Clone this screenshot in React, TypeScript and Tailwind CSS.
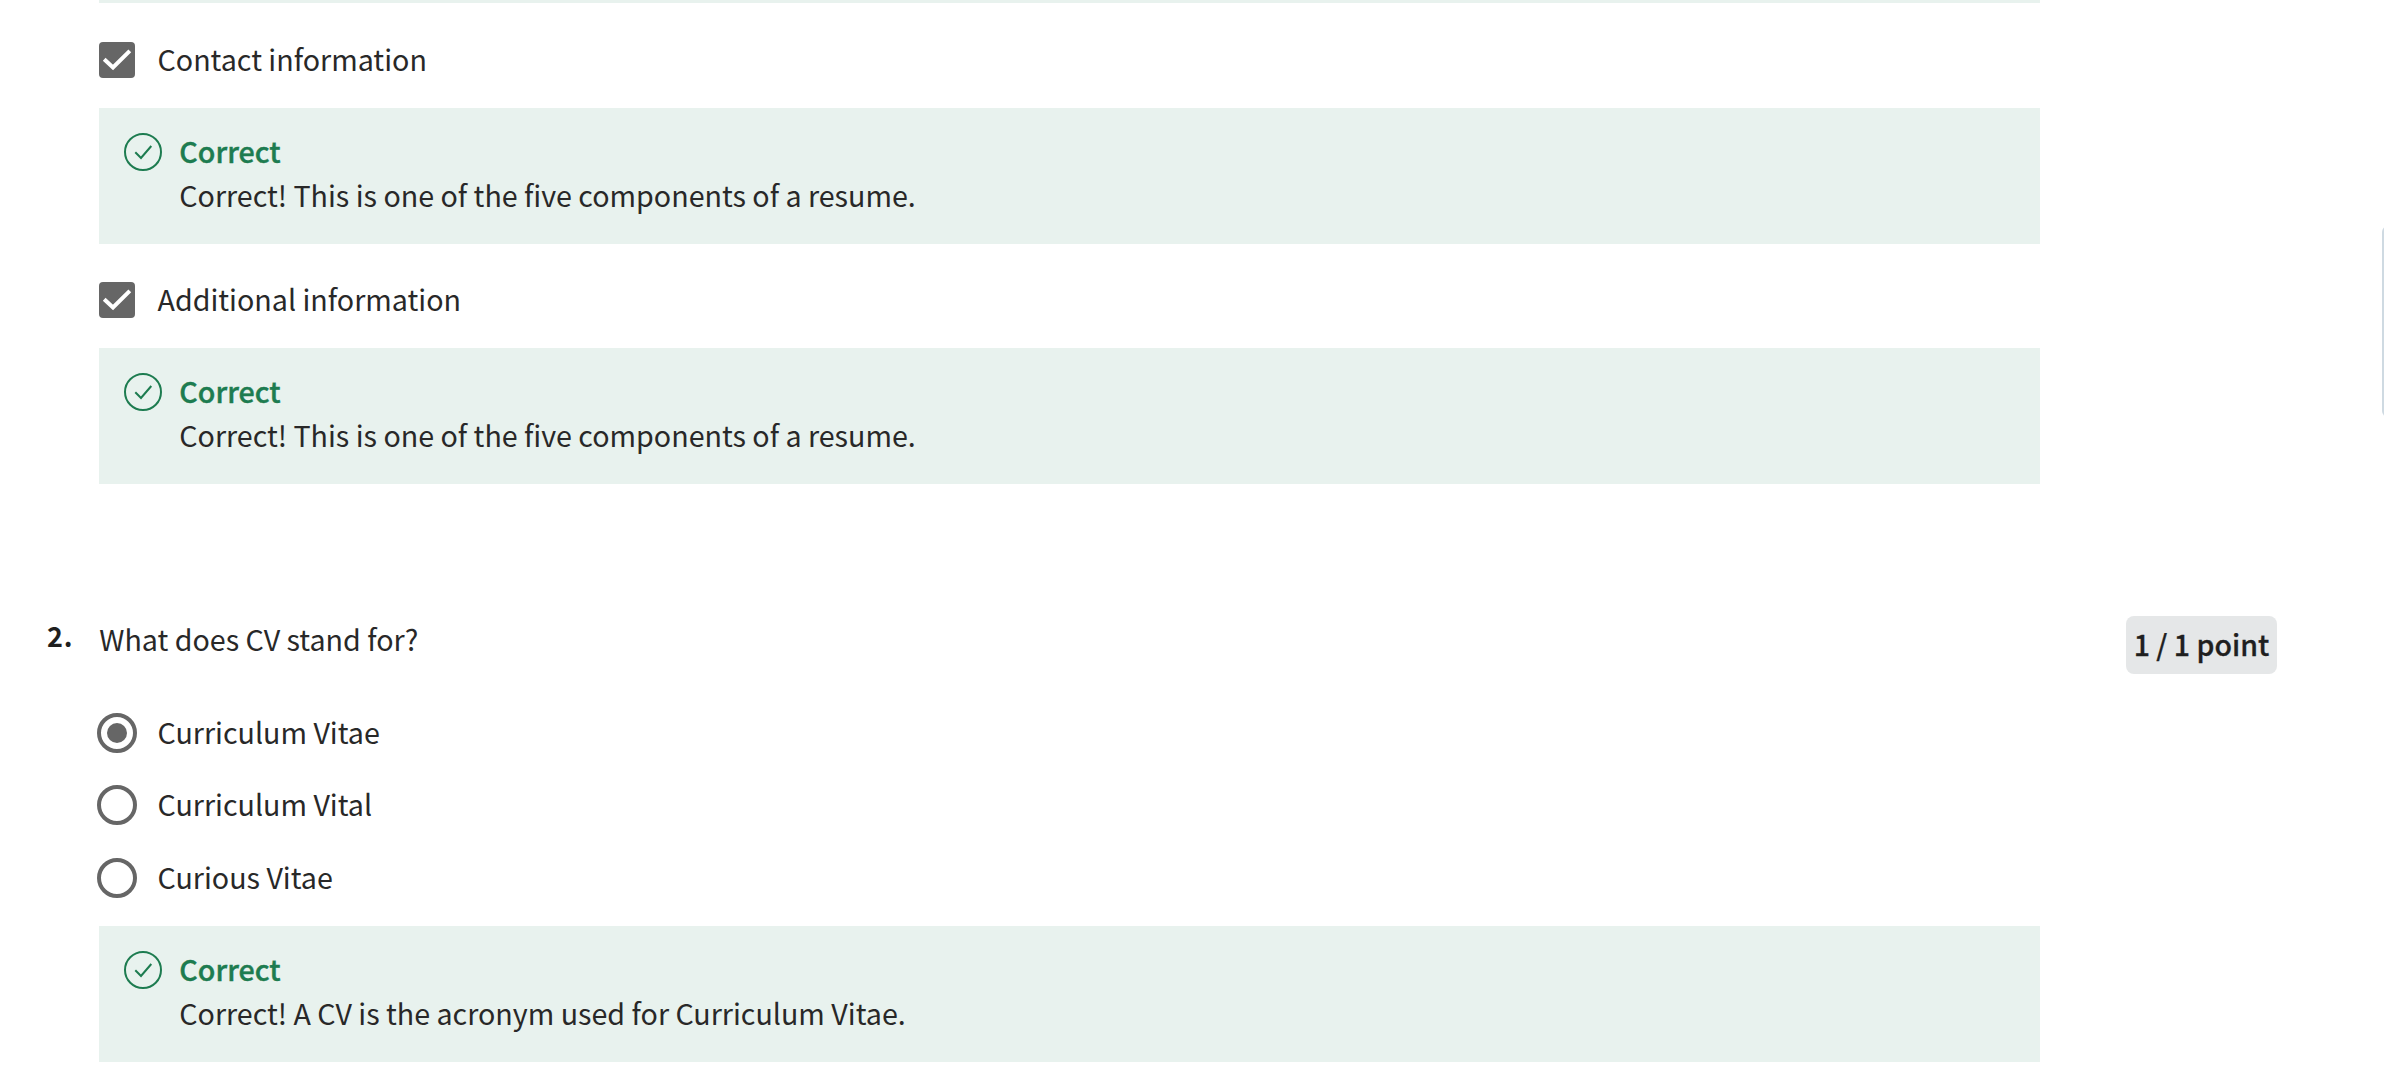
import React, { type ReactNode } from "react";

function Check() {
  return (
    <svg className="shrink-0 rounded-[4px] bg-[#666]" width="36" height="36" viewBox="0 0 36 36" fill="none" stroke="#fff" strokeWidth="4">
      <path d="M5.200 17.200 14 25.500 30.800 8.800" />
    </svg>
  );
}

function Radio({ on }: { on?: boolean }) {
  return (
    <svg className="-mx-0.5 shrink-0" width="40" height="40" viewBox="0 0 40 40">
      <circle cx="20" cy="20" r="18" fill="#fff" stroke="#666" strokeWidth="4" />
      {on && <circle cx="20" cy="20" r="10" fill="#666" />}
    </svg>
  );
}

function Option({ control, children }: { control: ReactNode; children: ReactNode }) {
  return (
    <label className="flex h-11 items-center gap-[22.5px]">
      {control}
      <span className="pb-0.5 leading-10">{children}</span>
    </label>
  );
}

function Feedback({ children }: { children: ReactNode }) {
  return (
    <div className="my-[26px] flex h-[136px] w-[1941px] bg-[#e8f2ee] pt-[21px] pl-6">
      <svg className="mt-[3px] shrink-0" width="40" height="40" viewBox="0 0 40 40" fill="none" stroke="#1d7c50" strokeWidth="2">
        <circle cx="20" cy="20" r="18" />
        <path d="M12.300 20.300 18 26 28.300 14" />
      </svg>
      <div className="ml-[16.3px] leading-[44px]">
        <div className="font-medium text-[#1d7c50] [-webkit-text-stroke:0.4px_#1d7c50]">Correct</div>
        <div>{children}</div>
      </div>
    </div>
  );
}

export default function App() {
  return (
    <main className="relative h-[1072px] w-[2384px] overflow-hidden bg-white pl-[99px] font-['Noto_Sans_CJK_SC',sans-serif] text-[28.65px] text-[#282828]">
      <div className="mb-[35px] h-[3px] w-[1941px] bg-[#e8f2ee]" />
      <Option control={<Check />}>Contact information</Option>
      <Feedback>Correct! This is one of the five components of a resume.</Feedback>
      <div className="mt-[34px]">
        <Option control={<Check />}>Additional information</Option>
      </div>
      <Feedback>Correct! This is one of the five components of a resume.</Feedback>

      <section className="mt-[132px]">
        <div className="mr-[107px] -ml-[52px] flex items-start">
          <span className="w-[52px] text-[27px] leading-[39px] font-bold tracking-[0.8px] text-[#1f1f1f]">2.</span>
          <span className="pt-px pl-[0.3px] leading-[44px]">What does CV stand for?</span>
          <span className="ml-auto flex h-[58px] w-[151px] justify-center rounded-lg bg-[#e5e7e8] text-[28.5px] leading-[56px] font-medium whitespace-nowrap text-[#1f1f1f] [-webkit-text-stroke:0.3px_#1f1f1f]">
            1 / 1 point
          </span>
        </div>
        <div className="mt-[37px]">
          <Option control={<Radio on />}>Curriculum Vitae</Option>
        </div>
        <div className="mt-7">
          <Option control={<Radio />}>Curriculum Vital</Option>
        </div>
        <div className="mt-[29px]">
          <Option control={<Radio />}>Curious Vitae</Option>
        </div>
        <Feedback>Correct! A CV is the acronym used for Curriculum Vitae.</Feedback>
      </section>

      <div className="absolute top-[226px] left-[2382px] h-[191px] w-3 rounded-md bg-[#cfdae2]" />
    </main>
  );
}
